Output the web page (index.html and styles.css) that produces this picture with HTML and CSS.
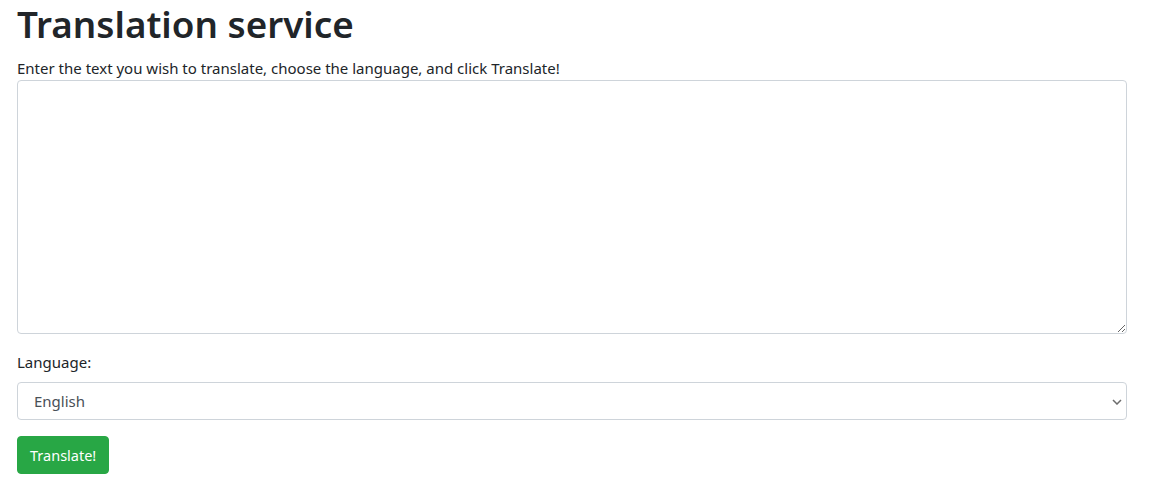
FILE: index.html
```html
<!DOCTYPE html>
<html lang="en">
<head>
<meta charset="utf-8">
<title>Translation service</title>
<link rel="stylesheet" href="styles.css">
</head>
<body>
<div class="container">
  <h1 class="title">Translation service</h1>
  <p class="intro">Enter the text you wish to translate, choose the language, and click Translate!</p>
  <form class="form">
    <textarea class="field textarea" rows="10"></textarea>
    <label class="label" for="lang">Language:</label>
    <div class="select-wrap">
      <select class="field select" id="lang">
        <option>English</option>
      </select>
      <svg class="chevron" width="10" height="6" viewBox="0 0 10 6" aria-hidden="true">
        <path d="M1 1 L5 5 L9 1" fill="none" stroke="#6c6c6c" stroke-width="1.5"/>
      </svg>
    </div>
    <button type="button" class="btn">Translate!</button>
  </form>
</div>
</body>
</html>
```

FILE: styles.css
```css
* { box-sizing: border-box; }
html, body { margin: 0; padding: 0; background: #fff; }
body {
  font-family: "Noto Sans", "Open Sans", sans-serif;
  font-size: 15px;
  line-height: 1.5;
  color: #212529;
}
.container {
  width: 1110px;
  margin-left: 17px;
}
.title {
  margin: 0 0 8px 0;
  font-size: 36.8px;
  font-weight: 600;
  line-height: 48px;
}
.intro {
  margin: 0;
  line-height: 24px;
}
.form {
  display: flex;
  flex-direction: column;
  align-items: flex-start;
}
.field {
  width: 100%;
  font-family: inherit;
  font-size: 15px;
  color: #495057;
  background: #fff;
  border: 1px solid #ced4da;
  border-radius: 4px;
}
.textarea {
  height: 254px;
  padding: 6px 12px;
  margin-bottom: 16px;
  resize: vertical;
}
.label {
  line-height: 24px;
  margin-bottom: 8px;
}
.select-wrap {
  position: relative;
  width: 100%;
  margin-bottom: 16px;
}
.select {
  display: block;
  height: 38px;
  padding: 6px 30px 6px 16px;
  -webkit-appearance: none;
  appearance: none;
}
.chevron {
  position: absolute;
  right: 5px;
  top: 17px;
  pointer-events: none;
}
.btn {
  height: 38px;
  padding: 6px 12px;
  font-family: inherit;
  font-size: 14.5px;
  color: #fff;
  background: #28a745;
  border: 1px solid #28a745;
  border-radius: 4px;
}
```
